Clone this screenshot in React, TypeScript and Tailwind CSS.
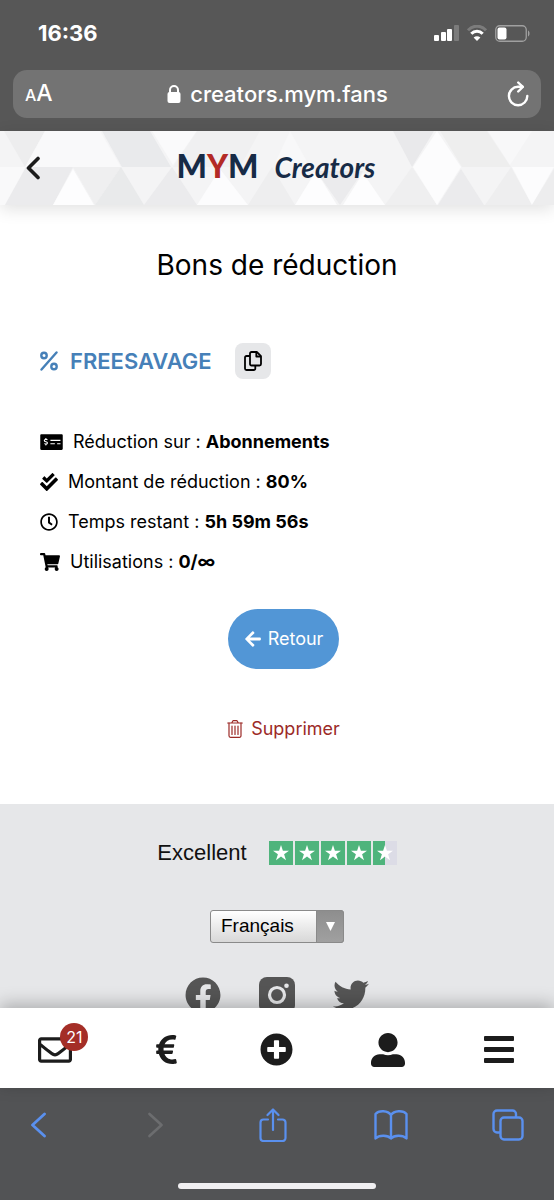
import {
  FaArrowLeft,
  FaCheckDouble,
  FaEuroSign,
  FaFacebook,
  FaMoneyCheckAlt,
  FaPlusCircle,
  FaRegClock,
  FaRegEnvelope,
  FaShoppingCart,
  FaTwitter,
  FaUserAlt,
} from "react-icons/fa";
import { useState } from "react";

const details = [
  { icon: FaMoneyCheckAlt, size: "h-[18px] w-[23px]", label: "Réduction sur :", value: "Abonnements" },
  { icon: FaCheckDouble, size: "h-[18px] w-[18px]", label: "Montant de réduction :", value: "80%" },
  { icon: FaRegClock, size: "h-[18px] w-[18px]", label: "Temps restant :", value: "5h 59m 56s" },
  { icon: FaShoppingCart, size: "h-[18px] w-5", label: "Utilisations :", value: "0/∞" },
];

const triangles = [
  { points: "4,0 45,0 25,36", fill: "#ededee" },
  { points: "45,0 100,0 121,36 25,36", fill: "#f9f9fa" },
  { points: "102,0 150,0 171,36 122,36", fill: "#e9eaec" },
  { points: "152,0 197,0 173,34", fill: "#fafafb" },
  { points: "0,36 26,36 5,74 0,74", fill: "#f9f9fa" },
  { points: "5,74 26,36 73,36 53,74", fill: "#ebebed" },
  { points: "53,74 73,38 94,74", fill: "#fdfdfe" },
  { points: "73,36 121,36 95,74", fill: "#efeff0" },
  { points: "95,74 121,36 144,74", fill: "#e9eaeb" },
  { points: "144,74 172,36 197,74", fill: "#ebebed" },
  { points: "173,36 197,0 260,0 240,36", fill: "#f0f0f1" },
  { points: "197,74 220,38 248,74", fill: "#fcfcfd" },
  { points: "248,74 272,36 295,74", fill: "#eeeeef" },
  { points: "276,30 290,0 310,36", fill: "#f8f8f9" },
  { points: "295,74 316,40 337,74", fill: "#fdfdfe" },
  { points: "316,40 363,40 340,74", fill: "#ebebed" },
  { points: "343,74 363,42 385,74", fill: "#fdfdfe" },
  { points: "385,74 412,36 437,74", fill: "#efeff0" },
  { points: "393,0 434,0 412,36", fill: "#e9e9eb" },
  { points: "437,0 461,36 437,74 413,36", fill: "#fcfcfd" },
  { points: "440,0 487,0 511,36 462,36", fill: "#eeeeee" },
  { points: "488,0 532,0 510,34", fill: "#f8f8f9" },
  { points: "438,74 461,38 484,74", fill: "#ebebed" },
  { points: "485,74 511,36 532,74", fill: "#eeeeef" },
  { points: "512,36 554,36 532,74", fill: "#fcfcfd" },
  { points: "532,74 554,38 554,74", fill: "#ededee" },
];

function StatusBar() {
  return (
    <div className="flex h-[70px] items-center justify-between pt-0 pr-6 pb-1 pl-[38px] text-white">
      <span className="text-[22px] font-bold">16:36</span>
      <div className="flex items-center gap-2">
        <svg className="h-4 w-[25px]" viewBox="0 0 25 16" fill="#fff">
          <rect x="0" y="10" width="5" height="6" rx="1" />
          <rect x="7" y="7" width="5" height="9" rx="1" />
          <rect x="13" y="4" width="5" height="12" rx="1" />
          <rect x="20" y="0" width="5" height="16" rx="1" fill="#7c7c7c" />
        </svg>
        <svg className="h-4 w-5" viewBox="0 0 20 16" fill="none">
          <path d="M1 5.300C6-.2 14-.2 19 5.300" stroke="#7c7c7c" strokeWidth="3" />
          <path d="M4.300 8.700c3.200-3.400 8.200-3.400 11.400 0" stroke="#fff" strokeWidth="3" />
          <path d="M10 16l-3.400-3.500c2-1.800 4.800-1.800 6.800 0z" fill="#fff" />
        </svg>
        <svg className="h-[17px] w-[35px]" viewBox="0 0 35 17" fill="none">
          <rect x=".75" y=".75" width="30.500" height="15.500" rx="4" stroke="#a0a0a0" strokeWidth="1.300" />
          <rect x="2.500" y="2.500" width="9" height="12" rx="2" fill="#fff" />
          <path d="M33 5.500c2 1 2 5 0 6z" fill="#a0a0a0" />
        </svg>
      </div>
    </div>
  );
}

function AddressBar() {
  return (
    <div className="mx-[13px] mb-[13px] flex h-12 items-center justify-between rounded-[14px] bg-[#737373] px-3 text-white">
      <button aria-label="Mise en page" className="w-8 text-left text-[23px] leading-none font-medium">
        <span className="text-base">A</span>A
      </button>
      <div className="flex items-center gap-2">
        <svg className="h-5 w-4" viewBox="0 0 16 20" fill="none">
          <rect x="1.500" y="8" width="13" height="11" rx="2" fill="#fff" />
          <path d="M4 9V6a4 4 0 0 1 8 0v3" stroke="#fff" strokeWidth="2" />
        </svg>
        <span className="text-[22px] font-medium">creators.mym.fans</span>
      </div>
      <button aria-label="Actualiser" className="flex w-8 justify-end">
        <svg
          className="h-[26px] w-[22px]"
          viewBox="0 0 22 26"
          fill="none"
          stroke="#fff"
          strokeWidth="2.400"
          strokeLinecap="round"
          strokeLinejoin="round"
        >
          <path d="M20.300 15A9.200 9.200 0 1 1 11 5.800h4.500" />
          <path d="M11.200 1.500l4.600 4.400-4.600 4.600" />
        </svg>
      </button>
    </div>
  );
}

function SiteHeader() {
  return (
    <header className="relative z-10 flex h-[74px] items-center bg-[#f4f4f5] shadow-[0_4px_16px_rgba(0,0,0,0.12)]">
      <svg
        className="absolute inset-0 h-full w-full"
        viewBox="0 0 554 74"
        preserveAspectRatio="xMidYMid slice"
      >
        {triangles.map((t) => (
          <polygon key={t.points} points={t.points} fill={t.fill} />
        ))}
      </svg>
      <button aria-label="Précédent" className="relative ml-[26px] w-6">
        <svg
          className="h-6 w-4"
          viewBox="0 0 16 24"
          fill="none"
          stroke="#1c1c1c"
          strokeWidth="3.600"
          strokeLinecap="round"
          strokeLinejoin="round"
        >
          <path d="M12 2.500L2.500 12 12 21.500" />
        </svg>
      </button>
      <div className="relative mr-[52px] flex flex-1 items-baseline justify-center gap-4 pb-1 leading-none text-[#172b46]">
        <span className="font-[Lato,sans-serif] text-[32px] font-black">
          M<span className="text-[#b32a25]">Y</span>M
        </span>
        <span className="font-[Lato,sans-serif] text-[28px] font-bold italic">Creators</span>
      </div>
    </header>
  );
}

function PromoCode() {
  const [copied, setCopied] = useState(false);

  return (
    <div className="flex items-center">
      <svg
        className="h-5 w-[18px]"
        viewBox="0 0 18 20"
        fill="none"
        stroke="#4680b8"
        strokeWidth="2.400"
        strokeLinecap="round"
      >
        <circle cx="4" cy="4.500" r="2.700" />
        <circle cx="14" cy="15.500" r="2.700" />
        <path d="M16.500 1.500l-15 17" />
      </svg>
      <h2 className="ml-3 text-[22px] font-semibold text-[#4680b8]">FREESAVAGE</h2>
      <button
        aria-label={copied ? "Copié" : "Copier"}
        onClick={() => setCopied(true)}
        className="ml-[23px] flex size-9 items-center justify-center rounded-lg bg-[#e6e7e9]"
      >
        <svg
          className="h-5 w-[18px]"
          viewBox="0 0 18 20"
          fill="none"
          stroke="#000"
          strokeWidth="1.800"
          strokeLinejoin="round"
        >
          <path d="M7.500 1h5.300L17 5.200V13a1.500 1.500 0 0 1-1.500 1.500h-8A1.500 1.500 0 0 1 6 13V2.500A1.500 1.500 0 0 1 7.500 1z" />
          <path d="M12.300 1.200V5.500h4.500" />
          <path d="M6 5H2.500A1.500 1.500 0 0 0 1 6.500v11A1.500 1.500 0 0 0 2.500 19h7.300a1.500 1.500 0 0 0 1.500-1.500v-3" />
        </svg>
      </button>
    </div>
  );
}

function Rating() {
  return (
    <div className="flex items-center gap-[22px]">
      <span className="font-['Liberation_Sans',Arial,sans-serif] text-[22px] leading-6 text-[#111]">
        Excellent
      </span>
      <div className="flex gap-[2px]">
        {[1, 1, 1, 1, 0.5].map((fill, i) => (
          <svg key={i} className="size-6" viewBox="0 0 24 24">
            <rect width="24" height="24" fill="#dcdce6" />
            <rect width={24 * fill} height="24" fill="#4fb47c" />
            <path
              fill="#fff"
              d="M12 4l1.900 5.700H20l-4.900 3.600 1.900 5.900-5-3.700-5 3.700 1.900-5.900L4 9.700h6.100z"
            />
          </svg>
        ))}
      </div>
    </div>
  );
}

function LanguageSelect() {
  return (
    <div className="relative mt-[45px]">
      <select
        aria-label="Langue"
        className="block h-[33px] w-[134px] appearance-none rounded-[3px] border border-[#8a8a8a] bg-linear-to-b from-white to-[#d8d8d8] pl-[10px] font-['Liberation_Sans',Arial,sans-serif] text-[19px] text-black"
      >
        <option>Français</option>
        <option>English</option>
        <option>Español</option>
      </select>
      <div className="pointer-events-none absolute inset-y-0 right-0 flex w-7 items-center justify-center rounded-r-[3px] border border-[#8a8a8a] bg-linear-to-b from-[#8e8e8e] to-[#a0a0a0]">
        <svg className="h-[9px] w-[9px]" viewBox="0 0 9 9" fill="#fff">
          <path d="M0 0h9L4.500 9z" />
        </svg>
      </div>
    </div>
  );
}

function SiteFooter() {
  return (
    <footer className="flex flex-1 flex-col items-center bg-[#e6e7e9] pt-[37px]">
      <Rating />
      <LanguageSelect />
      <div className="mt-[34px] flex gap-[38px] text-[#555]">
        <a href="#facebook" aria-label="Facebook">
          <FaFacebook className="size-9" />
        </a>
        <a href="#instagram" aria-label="Instagram">
          <svg className="size-9" viewBox="0 0 36 36">
            <rect width="36" height="36" rx="8" fill="#555" />
            <circle cx="18" cy="18" r="7.500" fill="none" stroke="#e6e7e9" strokeWidth="3.200" />
            <circle cx="27.500" cy="8.700" r="2.300" fill="#e6e7e9" />
          </svg>
        </a>
        <a href="#twitter" aria-label="Twitter">
          <FaTwitter className="size-9" />
        </a>
      </div>
    </footer>
  );
}

function BottomNav() {
  return (
    <nav className="relative z-10 grid h-20 grid-cols-5 place-items-center bg-white pt-[3px] text-[#1c1c1c] shadow-[0_-4px_16px_rgba(0,0,0,0.25)]">
      <a href="#messages" aria-label="Messages" className="relative">
        <FaRegEnvelope className="size-[34px]" />
        <span className="absolute -top-[10px] -right-4 flex size-7 items-center justify-center rounded-full bg-[#a42e27] text-base text-white">
          21
        </span>
      </a>
      <a href="#revenus" aria-label="Revenus">
        <FaEuroSign className="size-[33px]" />
      </a>
      <a href="#ajouter" aria-label="Ajouter">
        <FaPlusCircle className="size-[33px]" />
      </a>
      <a href="#profil" aria-label="Profil">
        <FaUserAlt className="size-[34px]" />
      </a>
      <button aria-label="Menu">
        <svg className="h-[27px] w-[30px]" viewBox="0 0 30 27" fill="currentColor">
          <rect width="30" height="5" rx="1" />
          <rect y="11" width="30" height="5" rx="1" />
          <rect y="22" width="30" height="5" rx="1" />
        </svg>
      </button>
    </nav>
  );
}

function BrowserBar() {
  return (
    <div className="flex h-28 flex-col items-center bg-[#525355]">
      <div className="flex w-full flex-1 items-center justify-between pr-7 pl-5 text-[#5a90ee]">
        <button aria-label="Page précédente" className="flex w-9 justify-center">
          <svg className="h-[26px] w-4" viewBox="0 0 16 26" fill="none" stroke="currentColor" strokeWidth="2.800" strokeLinecap="round" strokeLinejoin="round">
            <path d="M14.500 2L2.500 13l12 11" />
          </svg>
        </button>
        <button aria-label="Page suivante" className="flex w-9 justify-center text-[#6c6d6f]">
          <svg className="h-[26px] w-4" viewBox="0 0 16 26" fill="none" stroke="currentColor" strokeWidth="2.600" strokeLinecap="round" strokeLinejoin="round">
            <path d="M1.500 2l12 11-12 11" />
          </svg>
        </button>
        <button aria-label="Partager" className="flex w-9 justify-center">
          <svg className="h-[34px] w-7" viewBox="0 0 28 34" fill="none" stroke="currentColor" strokeWidth="2.200" strokeLinecap="round" strokeLinejoin="round">
            <path d="M9 11.500H4.500a3 3 0 0 0-3 3V30a3 3 0 0 0 3 3h19a3 3 0 0 0 3-3V14.500a3 3 0 0 0-3-3H19" />
            <path d="M14 22V2M8.500 7L14 1.500 19.500 7" />
          </svg>
        </button>
        <button aria-label="Signets" className="flex w-9 justify-center">
          <svg className="h-[30px] w-[34px]" viewBox="0 0 34 30" fill="none" stroke="currentColor" strokeWidth="2.400" strokeLinejoin="round">
            <path d="M17 5c-3-4.500-12-5-15.500-1v24.500c4-4 12.500-3.500 15.500 0 3-3.500 11.500-4 15.500 0V4C29 0 20 .5 17 5zM17 5v23" />
          </svg>
        </button>
        <button aria-label="Onglets" className="flex w-9 justify-center">
          <svg className="size-8" viewBox="0 0 32 32" fill="none" stroke="currentColor" strokeWidth="2.400" strokeLinejoin="round">
            <path d="M8 23.500H5a3.500 3.500 0 0 1-3.500-3.500V5A3.500 3.500 0 0 1 5 1.500h15.500A3.500 3.500 0 0 1 24 5v3" />
            <rect x="8.500" y="8.500" width="22" height="22" rx="3.500" />
          </svg>
        </button>
      </div>
      <div className="mt-[22px] mb-[11px] h-[6px] w-[198px] rounded-full bg-[#f0eff1]" />
    </div>
  );
}

export default function App() {
  return (
    <div className="flex h-screen flex-col overflow-hidden bg-white font-[Inter,sans-serif] text-black">
      <div className="bg-[#575757]">
        <StatusBar />
        <AddressBar />
      </div>

      <SiteHeader />

      <div className="flex min-h-0 flex-1 flex-col overflow-hidden">
        <h1 className="mt-10 text-center text-[28px] leading-10">Bons de réduction</h1>

        <main className="pt-[58px] pr-[27px] pb-[60px] pl-10">
          <PromoCode />

          <ul className="mt-[43px] text-lg">
            {details.map(({ icon: Icon, size, label, value }) => (
              <li key={label} className="flex h-10 items-center gap-[10px]">
                <Icon className={size} />
                <span>
                  {label} <strong className="font-bold">{value}</strong>
                </span>
              </li>
            ))}
          </ul>

          <div className="mt-[27px] flex flex-col items-center">
            <button className="flex h-[60px] items-center gap-[6px] rounded-full bg-[#5296d6] px-4 text-lg text-white">
              <FaArrowLeft className="size-[18px]" />
              Retour
            </button>
            <button className="mt-[45px] flex h-[30px] items-center gap-2 text-lg text-[#9c2a27]">
              <svg className="h-[18px] w-4" viewBox="0 0 16 18" fill="none" stroke="currentColor" strokeWidth="1.200" strokeLinecap="round" strokeLinejoin="round">
                <path d="M.7 3h14.600M4.800 2.800L6 .7h4l1.200 2.100" />
                <path d="M2 3v12.800a1.500 1.500 0 0 0 1.500 1.500h9a1.500 1.500 0 0 0 1.500-1.500V3M5 6v8.500M8 6v8.500M11 6v8.500" />
              </svg>
              Supprimer
            </button>
          </div>
        </main>

        <SiteFooter />
      </div>

      <BottomNav />
      <BrowserBar />
    </div>
  );
}
